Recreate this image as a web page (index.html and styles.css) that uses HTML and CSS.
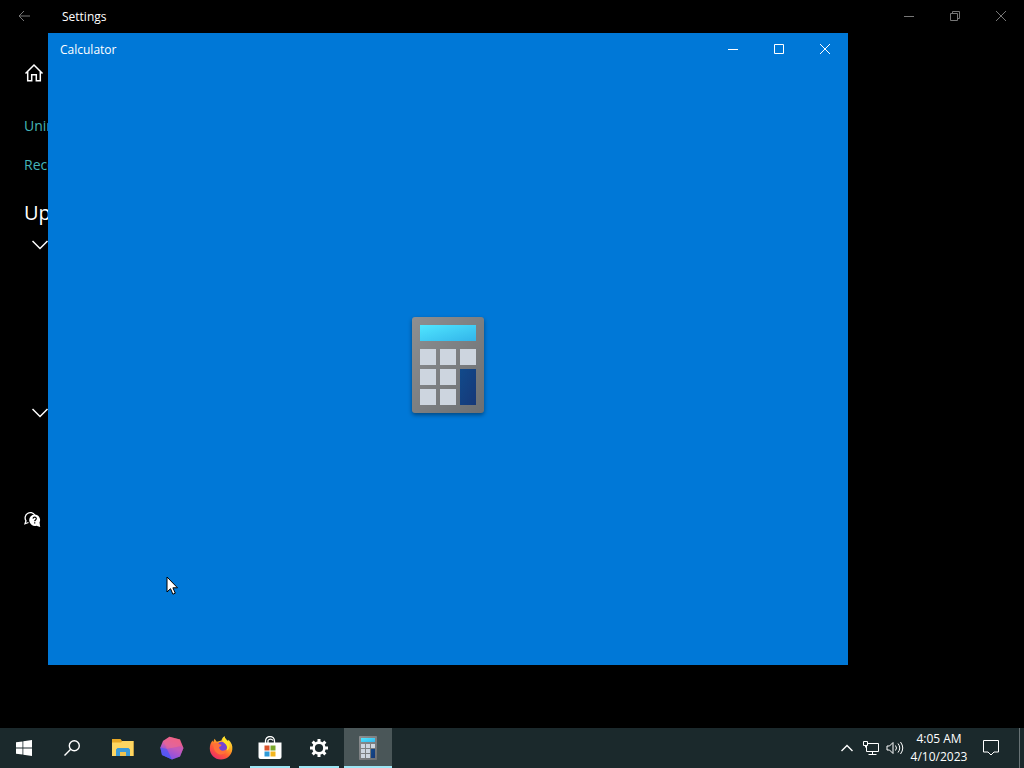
FILE: index.html
```html
<!DOCTYPE html>
<html lang="en">
<head>
  <meta charset="UTF-8" />
  <meta name="viewport" content="width=device-width, initial-scale=1.0"/>
  <title>Calculator</title>
  <link rel="stylesheet" href="styles.css">
</head>
<body>

  <main class="desktop">

    <!-- Settings window -->
    <section class="settings">
      <header class="title-bar">
        <button class="back-button" aria-label="Back">
          <svg width="12" height="12" viewBox="0 0 12 12"><path d="M12 6H1M6 1L1 6l5 5"/></svg>
        </button>
        <h1>Settings</h1>
        <div class="window-buttons">
          <button aria-label="Minimize"><svg width="10" height="10" viewBox="0 0 10 10"><path d="M0 5.5h10"/></svg></button>
          <button aria-label="Restore"><svg width="10" height="10" viewBox="0 0 10 10"><path d="M.5 2.5h7v7h-7zM2.5 2.5v-2h7v7h-2"/></svg></button>
          <button aria-label="Close"><svg width="10" height="10" viewBox="0 0 10 10"><path d="M0 0l10 10M10 0L0 10"/></svg></button>
        </div>
      </header>

      <div class="settings-content">
        <a href="#" class="home-link" aria-label="Home">
          <svg width="20" height="20" viewBox="0 0 20 20"><path d="M1.500 10.500L10 2l8.500 8.500M3.700 8.500v9.300h4v-6h4.600v6h4V8.500"/></svg>
        </a>
        <a href="#" class="update-link">Unin</a>
        <a href="#" class="update-link">Reco</a>
        <h2>Up</h2>
        <button class="expander" aria-label="Expand updates">
          <svg width="16" height="10" viewBox="0 0 16 10"><path d="M.5 1L8 8.500 15.500 1"/></svg>
        </button>
        <button class="expander" aria-label="Expand more updates">
          <svg width="16" height="10" viewBox="0 0 16 10"><path d="M.5 1L8 8.500 15.500 1"/></svg>
        </button>
        <a href="#" class="help-link" aria-label="Get help">
          <svg width="18" height="18" viewBox="0 0 18 18">
            <path d="M4.500 11.500L1 12.800l1-3A5 5 0 1 1 10.800 4" fill="none" stroke="#fff" stroke-width="1.300"/>
            <path d="M10.700 3.500a5.500 5.500 0 0 1 4.800 8l.7 4.500-3.800-1.300a5.700 5.700 0 1 1-1.700-11.200z" fill="#fff"/>
            <path d="M9 7.600c.2-2 3.500-1.800 3.300.2-.1 1.200-1.600 1.200-1.600 2.500M10.700 11.300v1.300" fill="none" stroke="#000" stroke-width="1.200"/>
          </svg>
        </a>
      </div>
    </section>

    <!-- Calculator window -->
    <section class="calculator">
      <header class="title-bar">
        <h1>Calculator</h1>
        <div class="window-buttons">
          <button aria-label="Minimize"><svg width="10" height="10" viewBox="0 0 10 10"><path d="M0 5.500h10"/></svg></button>
          <button aria-label="Maximize"><svg width="10" height="10" viewBox="0 0 10 10"><path d="M.5.5h9v9h-9z"/></svg></button>
          <button aria-label="Close"><svg width="10" height="10" viewBox="0 0 10 10"><path d="M0 0l10 10M10 0L0 10"/></svg></button>
        </div>
      </header>
      <div class="splash">
        <svg class="splash-logo" width="72" height="96" viewBox="0 0 72 96">
          <defs>
            <linearGradient id="body" x1="0" y1="0" x2="1" y2="1">
              <stop offset="0" stop-color="#8d8f91"/>
              <stop offset="1" stop-color="#6c6f72"/>
            </linearGradient>
            <linearGradient id="display" x1="0" y1="0" x2="1" y2="1">
              <stop offset="0" stop-color="#50e6ff"/>
              <stop offset="1" stop-color="#32b4ea"/>
            </linearGradient>
            <linearGradient id="equals" x1="0" y1="0" x2="1" y2="1">
              <stop offset="0" stop-color="#114a8b"/>
              <stop offset="1" stop-color="#163878"/>
            </linearGradient>
            <g id="calculator-icon">
              <rect width="72" height="96" rx="3" fill="url(#body)"/>
              <path d="M8 8h56v16H8z" fill="url(#display)"/>
              <path d="M8 32h16v16H8zM28 32h16v16H28zM48 32h16v16H48zM8 52h16v16H8zM28 52h16v16H28zM8 72h16v16H8zM28 72h16v16H28z" fill="#cdd5df"/>
              <path d="M48 52h16v36H48z" fill="url(#equals)"/>
            </g>
          </defs>
          <use href="#calculator-icon"/>
        </svg>
      </div>
    </section>

    <svg class="cursor" width="13" height="20" viewBox="0 0 13 20"><path d="M1 1v15l3.500-3.300 2.400 5.500 2.400-1-2.400-5.400h4.600z" fill="#fff" stroke="#000"/></svg>
  </main>

  <footer class="taskbar">
    <div class="start">
      <button aria-label="Start">
        <svg width="16" height="16" viewBox="0 0 16 16" fill="#fff"><path d="M0 2.300L6.500 1.400v6.200H0zM7.300 1.300L16 0v7.600H7.300zM0 8.400h6.500v6.200L0 13.700zM7.300 8.400H16V16l-8.700-1.300z"/></svg>
      </button>
      <button aria-label="Search">
        <svg width="16" height="16" viewBox="0 0 16 16" fill="none" stroke="#fff" stroke-width="1.400"><circle cx="10.300" cy="5.700" r="5"/><path d="M6.700 9.300L.5 15.500"/></svg>
      </button>
    </div>

    <nav class="apps">
      <button aria-label="File Explorer">
        <svg width="22" height="18" viewBox="0 0 22 18">
          <path d="M0 0h8.500l1.500 2h11.500v15H0z" fill="#e9a825"/>
          <path d="M0 3.500h9L10.500 2h11v15H0z" fill="#ffd661"/>
          <path d="M4 17v-6.500l1.500-1.500h11l1.500 1.500V17h-4v-4H8v4z" fill="#3c9ad8"/>
          <path d="M8 13h6v4H8z" fill="#efc350"/>
        </svg>
      </button>
      <button aria-label="Crystal">
        <svg width="24" height="24" viewBox="0 0 24 24">
          <defs>
            <linearGradient id="crystal" x1=".7" y1="0" x2=".25" y2="1">
              <stop offset="0" stop-color="#f35b78"/>
              <stop offset=".45" stop-color="#d45fac"/>
              <stop offset=".75" stop-color="#8150e8"/>
              <stop offset="1" stop-color="#4b55ff"/>
            </linearGradient>
          </defs>
          <path d="M9.500.8L20 3.500 23.500 12 20 20.500 12 23.500 2 19 .3 11.500 3 5z" fill="url(#crystal)"/>
          <path d="M.3 11.500L7 13l5 10.500L2 19z" fill="#4d59f5" opacity=".7"/>
          <path d="M9.500.8L20 3.500l.5 6.800L7 13 3 5z" fill="#f06a8e" opacity=".5"/>
          <path d="M20.500 10.300l3 1.700-3.500 8.500-8 3L7 13z" fill="#b256c9" opacity=".5"/>
        </svg>
      </button>
      <button aria-label="Firefox">
        <svg width="24" height="24" viewBox="0 0 24 24">
          <defs>
            <linearGradient id="fox" x1=".85" y1="0" x2=".2" y2="1">
              <stop offset="0" stop-color="#fff44f"/>
              <stop offset=".35" stop-color="#ffae22"/>
              <stop offset=".65" stop-color="#ff5a36"/>
              <stop offset="1" stop-color="#e92770"/>
            </linearGradient>
          </defs>
          <path d="M12.500 4.500C12.700 2.500 14 1 15.500.2c.3 2.300 1.800 3.300 3.500 5l.5-1.500c3 3 4.300 6 3.800 9.800-.7 6-5.500 10-11.300 10C5.500 23.500.8 18.500.8 12.500c0-3.300 1-6 2.700-8l.7 1.800 1.300-3.500 2.300 3z" fill="url(#fox)"/>
          <circle cx="12.500" cy="11.300" r="5.500" fill="#7543d4"/>
          <path d="M4.500 8c2-2 4.500-1.500 6 .2l2 .5c-.3 1.500-1.500 1.800-2.500 2.400.3 3.800 4.500 5 8 2-.5 4.500-4.500 6.100-8 5.100C6 16.500 4 12.500 4.500 8z" fill="#ff7139"/>
          <path d="M15.500.2c-3 3.500-1.500 6 1 7.800 2 2 2 4 1 6.500 3.500-1.500 4-5.500 1.500-9.300-1.700-1.700-3.200-2.700-3.500-5z" fill="#ffe226"/>
        </svg>
      </button>
      <button class="running" aria-label="Microsoft Store">
        <svg width="24" height="24" viewBox="0 0 24 24">
          <path d="M7.500 7V5a4.500 4.500 0 0 1 9 0v2M10 7V4.500a3 3 0 0 1 5 0" fill="none" stroke="#fff" stroke-width="1.300"/>
          <path d="M.5 6.500h23V21a2 2 0 0 1-2 2h-19a2 2 0 0 1-2-2z" fill="#fff"/>
          <path d="M6.500 9.500h5v5h-5z" fill="#d9532c"/>
          <path d="M12.500 9.500h5v5h-5z" fill="#7aa82c"/>
          <path d="M6.500 15.500h5v5h-5z" fill="#2f9bd8"/>
          <path d="M12.500 15.500h5v5h-5z" fill="#f2b51d"/>
        </svg>
      </button>
      <button class="running" aria-label="Settings">
        <svg width="20" height="20" viewBox="0 0 20 20">
          <circle cx="10" cy="10" r="5.400" fill="none" stroke="#fff" stroke-width="2.600"/>
          <path d="M10 1v3.500M10 15.500V19M1 10h3.500M15.500 10H19M3.600 3.600l2.500 2.500M13.900 13.900l2.500 2.500M3.600 16.400l2.500-2.500M13.900 6.100l2.500-2.500" stroke="#fff" stroke-width="3"/>
        </svg>
      </button>
      <button class="running active" aria-label="Calculator">
        <svg width="18" height="24" viewBox="0 0 72 96"><use href="#calculator-icon"/></svg>
      </button>
    </nav>

    <div class="tray">
      <button aria-label="Show hidden icons">
        <svg class="tray-arrow" width="12" height="8" viewBox="0 0 12 8"><path d="M.5 7L6 1.500 11.500 7"/></svg>
      </button>
      <button aria-label="Network">
        <svg width="16" height="14" viewBox="0 0 16 14"><path d="M5 2.500h10.500v8H3.500V5M9.500 10.500v3M5.500 13.500h8M.5.500h4v4h-4zM2.500 4.500v2"/></svg>
      </button>
      <button aria-label="Volume">
        <svg width="18" height="14" viewBox="0 0 18 14"><path d="M1 5v4h2.500L7 12.500v-11L3.500 5zM9.500 4.500q2 2.500 0 5M12 2.500q3.500 4.500 0 9M14.500 1q4.500 6 0 12"/></svg>
      </button>
      <button class="clock"><time datetime="2023-04-10T04:05">4:05 AM<br>4/10/2023</time></button>
      <button class="notifications" aria-label="Notifications">
        <svg width="16" height="16" viewBox="0 0 16 16"><path d="M.5.500h15v11.500h-4.500L8 15l-3-3H.5z"/></svg>
      </button>
      <button class="show-desktop" aria-label="Show desktop"></button>
    </div>
  </footer>

</body>
</html>
```
FILE: styles.css
```css
:root {
  --window-blue: #0078d7;
  --taskbar-color: #1b292c;
  --link-color: #45b5b9;
  --underline: #9ee6f5;
}

* {
  box-sizing: border-box;
  margin: 0;
  padding: 0;
}

body {
  display: flex;
  flex-direction: column;
  height: 100vh;
  overflow: hidden;
  background-color: #000;
  color: #fff;
  font-family: "Segoe UI", "Open Sans", sans-serif;
  font-size: 12px;
}

button {
  display: flex;
  align-items: center;
  justify-content: center;
  border: none;
  background: none;
  color: inherit;
  font: inherit;
}

a {
  color: inherit;
  text-decoration: none;
}

svg {
  display: block;
  flex: none;
}

.desktop {
  position: relative;
  flex: 1;
}

.title-bar {
  display: flex;
  align-items: center;
  height: 32px;
}

.title-bar h1 {
  font-size: 12px;
  font-weight: normal;
}

.title-bar svg {
  fill: none;
  stroke: currentColor;
}

.window-buttons {
  display: flex;
  height: 100%;
  margin-left: auto;
}

.window-buttons button {
  width: 46px;
}

/* Settings */
.back-button {
  width: 48px;
  height: 32px;
  margin-right: 14px;
}

.settings .title-bar button {
  color: #777;
}

.settings-content {
  display: flex;
  flex-direction: column;
  align-items: flex-start;
  padding: 31px 24px;
}

.settings-content svg {
  fill: none;
  stroke: #fff;
  stroke-width: 1.5;
}

.settings-content .help-link svg {
  stroke: none;
}

.home-link {
  margin-bottom: 33px;
}

.update-link {
  margin-bottom: 19px;
  color: var(--link-color);
  font-size: 14px;
  line-height: 20px;
}

.settings-content h2 {
  margin-top: 5px;
  font-size: 20px;
  font-weight: normal;
  line-height: 28px;
}

.expander {
  height: 10px;
  margin: 13px 0 0 8px;
}

.expander + .expander {
  margin-top: 158px;
}

.help-link {
  margin-top: 93px;
}

/* Calculator */
.calculator {
  position: absolute;
  top: 33px;
  left: 48px;
  display: flex;
  flex-direction: column;
  width: calc(100% - 224px);
  height: calc(100% - 96px);
  background-color: var(--window-blue);
}

.calculator .title-bar {
  padding-left: 12px;
}

.splash {
  display: flex;
  flex: 1;
  align-items: center;
  justify-content: center;
}

.splash-logo {
  filter: drop-shadow(0 2px 2px rgba(0, 0, 0, 0.4));
}

.cursor {
  position: absolute;
  top: 576px;
  left: 166px;
}

/* Taskbar */
.taskbar {
  display: flex;
  height: 40px;
  background-color: var(--taskbar-color);
}

.start,
.apps,
.tray {
  display: flex;
}

.start button,
.apps button {
  position: relative;
  width: 48px;
}

.apps {
  gap: 1px;
  margin-left: 3px;
}

.running::after {
  content: "";
  position: absolute;
  right: 4px;
  bottom: 0;
  left: 4px;
  height: 2px;
  background-color: var(--underline);
}

.apps .active {
  background-color: #4a5658;
}

.active::after {
  right: 0;
  left: 0;
}

.tray {
  margin-left: auto;
}

.tray button {
  width: 24px;
}

.tray svg {
  fill: none;
  stroke: #fff;
}

.tray .tray-arrow {
  stroke-width: 1.4;
}

.tray .clock {
  width: 64px;
  line-height: 18px;
}

.tray .notifications {
  width: 40px;
}

.tray .show-desktop {
  width: 5px;
  margin-left: 8px;
  border-left: 1px solid #687275;
}
```
